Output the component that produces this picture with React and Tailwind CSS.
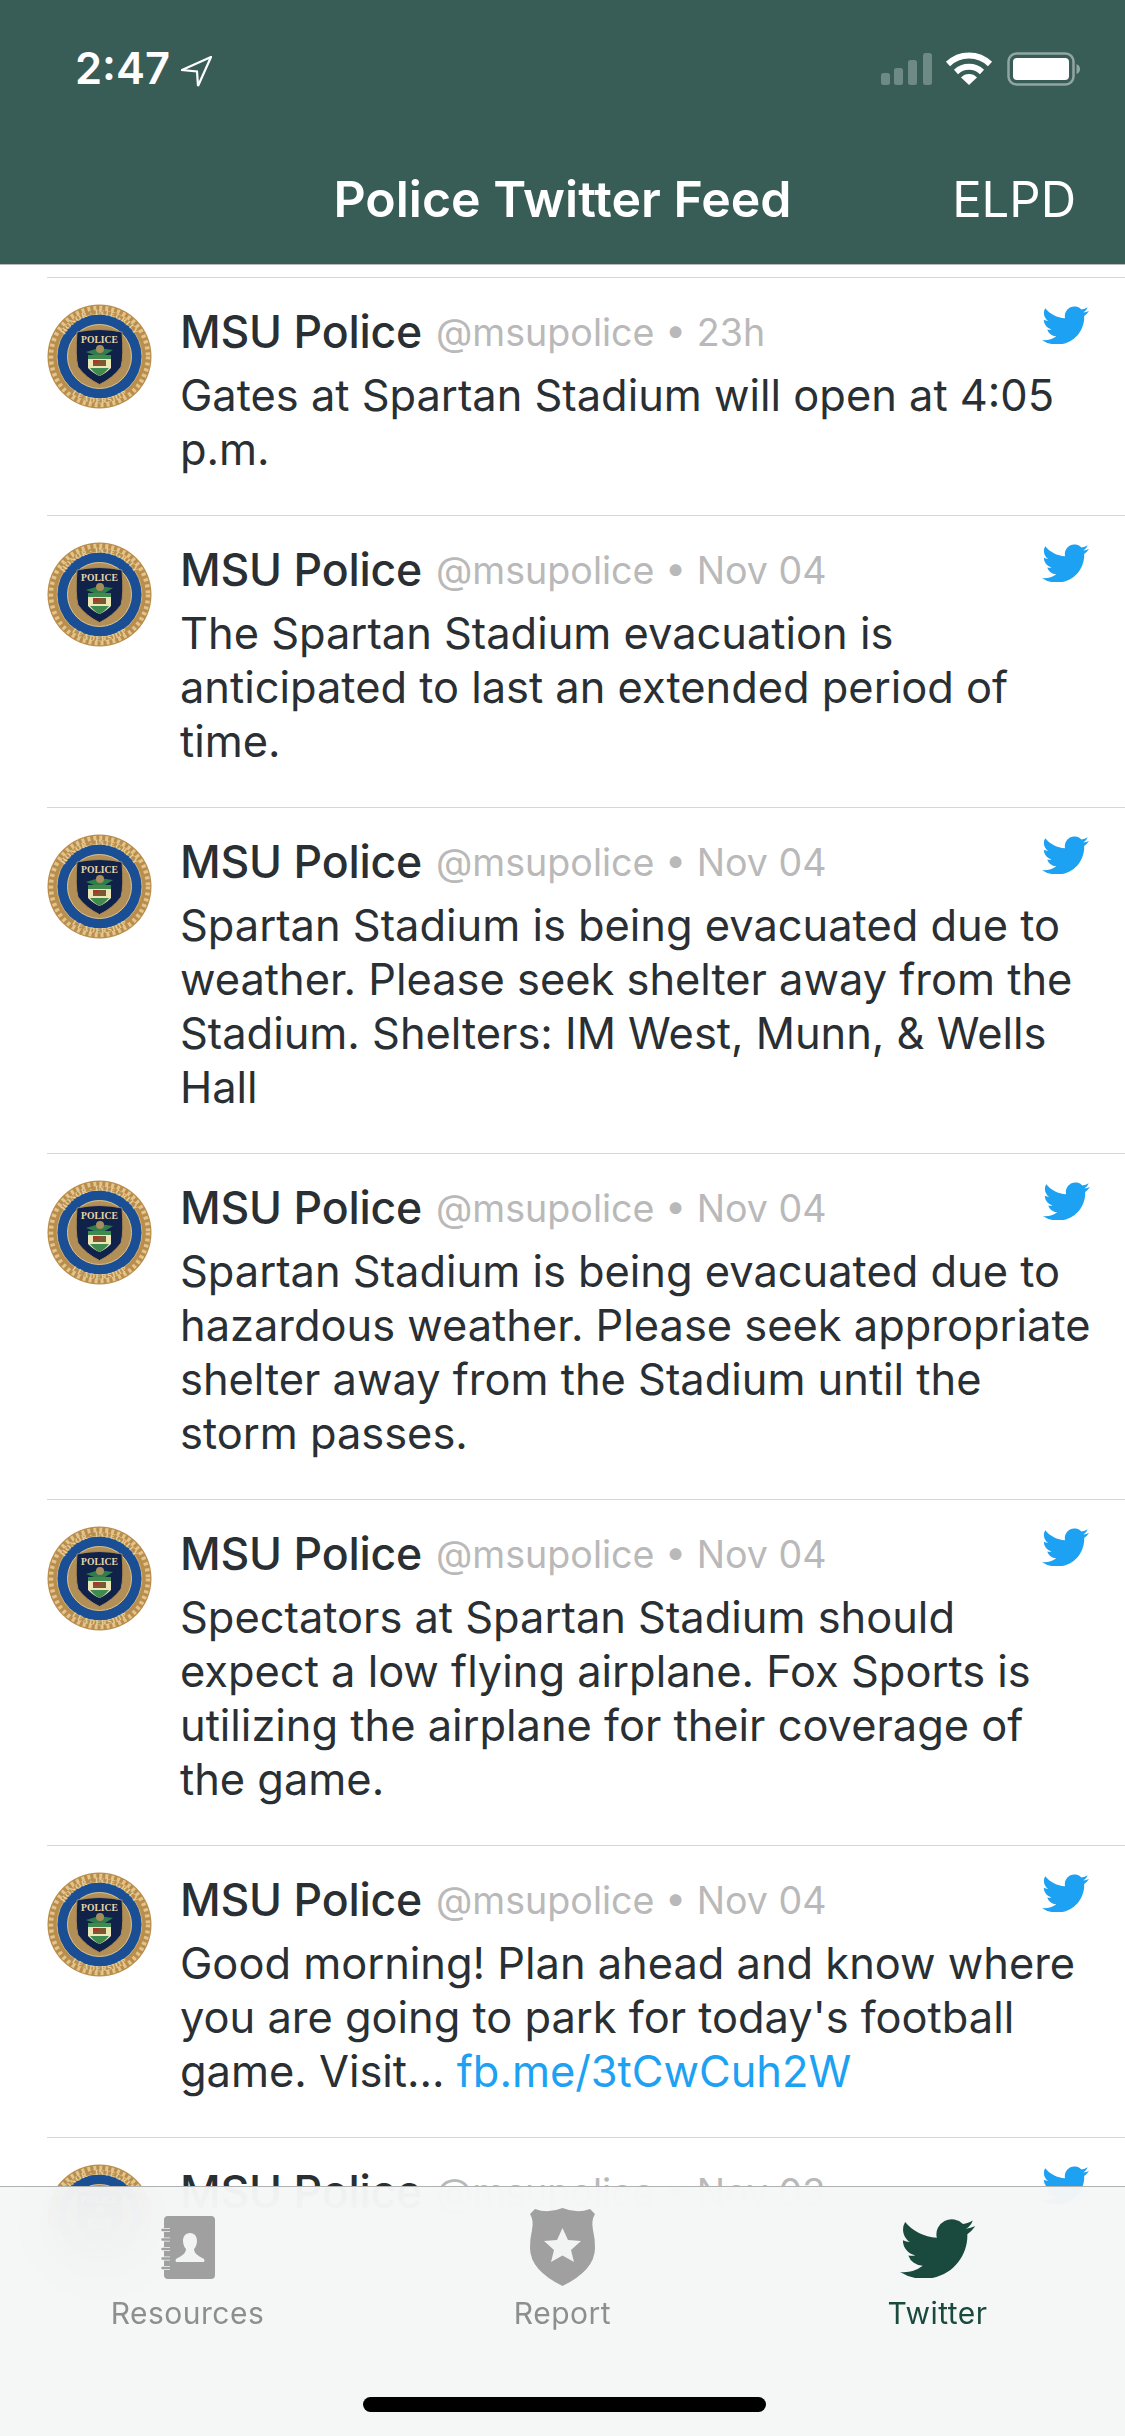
import React, { useId } from 'react';

const tweets = [
  { when: '23h', body: <>Gates at Spartan Stadium will open at 4:05<br />p.m.</> },
  { when: 'Nov 04', body: <>The Spartan Stadium evacuation is<br />anticipated to last an extended period of<br />time.</> },
  { when: 'Nov 04', body: <>Spartan Stadium is being evacuated due to<br />weather. Please seek shelter away from the<br />Stadium. Shelters: IM West, Munn, &amp; Wells<br />Hall</> },
  { when: 'Nov 04', body: <>Spartan Stadium is being evacuated due to<br />hazardous weather. Please seek appropriate<br />shelter away from the Stadium until the<br />storm passes.</> },
  { when: 'Nov 04', body: <>Spectators at Spartan Stadium should<br />expect a low flying airplane. Fox Sports is<br />utilizing the airplane for their coverage of<br />the game.</> },
  { when: 'Nov 04', body: <>Good morning! Plan ahead and know where<br />you are going to park for today's football<br />game. Visit... <span className="text-[#1da1f2]">fb.me/3tCwCuh2W</span></> },
  { when: 'Nov 03', body: null },
];

const BIRD = 'M23.953 4.57a10 10 0 01-2.825.775 4.958 4.958 0 002.163-2.723c-.951.555-2.005.959-3.127 1.184a4.92 4.92 0 00-8.384 4.482C7.69 8.095 4.067 6.13 1.64 3.162a4.822 4.822 0 00-.666 2.475c0 1.71.87 3.213 2.188 4.096a4.904 4.904 0 01-2.228-.616v.06a4.923 4.923 0 003.946 4.827 4.996 4.996 0 01-2.212.085 4.936 4.936 0 004.604 3.417 9.867 9.867 0 01-6.102 2.105c-.39 0-.779-.023-1.17-.067a13.995 13.995 0 007.557 2.209c9.053 0 13.998-7.496 13.998-13.985 0-.21 0-.42-.015-.63A9.935 9.935 0 0024 4.59z';

function Bird({ className }) {
  return (
    <svg viewBox="0 1.5 24 20" preserveAspectRatio="none" className={className}>
      <path d={BIRD} fill="currentColor" />
    </svg>
  );
}

function Seal() {
  const id = useId();
  return (
    <svg viewBox="0 0 105 105" className="w-[105px] h-[105px] shrink-0">
      <defs>
        <path id={id + 'top'} d="M 14 66 A 41 41 0 1 1 91 66" />
        <path id={id + 'bot'} d="M 17 72 A 40 40 0 0 0 88 72" />
      </defs>
      <circle cx="52.5" cy="52.5" r="52" fill="#b98d4c" />
      <circle cx="52.5" cy="52.5" r="48.5" fill="none" stroke="#e2c48c" strokeWidth="4.5" strokeDasharray="3 3" />
      <circle cx="52.5" cy="52.5" r="42.5" fill="#1a4f96" stroke="#d3b175" strokeWidth="1" />
      <circle cx="52.5" cy="52.5" r="32" fill="#b38f58" stroke="#ddc48f" strokeWidth="1" />
      <text fontFamily="'Liberation Serif', serif" fontWeight="700" fontSize="7.6" fill="#ecd49c" letterSpacing="0.35">
        <textPath href={'#' + id + 'top'} startOffset="50%" textAnchor="middle">HONOR · INTEGRITY</textPath>
      </text>
      <text fontFamily="'Liberation Serif', serif" fontWeight="700" fontSize="7.6" fill="#ecd49c" letterSpacing="0.3">
        <textPath href={'#' + id + 'bot'} startOffset="50%" textAnchor="middle" dominantBaseline="hanging">LEADERSHIP</textPath>
      </text>
      <path d="M30 28 Q52 23 75 28 Q77 52 74 63 Q66 74 52.5 80.5 Q39 74 31 63 Q28 52 30 28 Z" fill="#10224a" stroke="#a88a55" strokeWidth="1" />
      <text x="52.5" y="39" textAnchor="middle" fontFamily="'Liberation Serif', serif" fontWeight="700" fontSize="9.6" fill="#e8d7a8">POLICE</text>
      <path d="M39 48 L52 44 L66 46 L58 51 L47 51 Z" fill="#2f7d4a" />
      <circle cx="53" cy="45" r="4" fill="#a58e5c" />
      <path d="M41 51 H64 V64 Q58 70 52.5 72 Q47 70 41 64 Z" fill="#efe6b8" />
      <path d="M41 51 H64 V55 H41 Z" fill="#3f8a4f" />
      <rect x="46" y="56" width="13" height="6" fill="#7a5a30" />
      <rect x="46" y="56" width="6" height="3" fill="#a33a2c" />
      <path d="M43 64 H62 Q57 70 52.5 72 Q48 70 43 64 Z" fill="#3f8a4f" />
    </svg>
  );
}

function Tweet({ when, body }) {
  return (
    <div className="flex pl-[47px]">
      <div className="flex flex-1 border-t-[1.5px] border-[#d6d6d8] pt-[26px] pb-[39px] pr-[36px]">
        <Seal />
        <div className="flex-1 min-w-0 ml-[28px] -mt-[5px]">
          <div className="flex items-baseline h-[54px]">
            <span className="text-[44.6px] font-medium text-[#292f33] tracking-[-0.2px]">MSU Police</span>
            <span className="text-[37.6px] text-[#b9b9b9] ml-[14px] -translate-y-[2px]">@msupolice • {when}</span>
            <Bird className="w-[47px] h-[39px] ml-auto self-start mt-[6px] text-[#1da1f2]" />
          </div>
          {body && <p className="text-[43.4px] leading-[54px] whitespace-nowrap text-[#292f33] mt-[15px]">{body}</p>}
        </div>
      </div>
    </div>
  );
}

function StatusBar() {
  return (
    <div className="flex items-center justify-between h-[39px] pl-[75px] pr-[45px]">
      <div className="flex items-center text-white">
        <span className="text-[43.5px] font-semibold leading-none">2:47</span>
        <svg viewBox="0 0 31 32" className="w-[31px] h-[32px] ml-[11px] mt-[6px]">
          <path d="M30 1 L1 14 L16 15.5 L17 30 Z" fill="none" stroke="#fff" strokeWidth="2.2" strokeLinejoin="miter" />
        </svg>
      </div>
      <div className="flex items-center">
        <svg viewBox="0 0 51 32" className="w-[51px] h-[32px]">
          <g fill="#fff" fillOpacity="0.28">
            <rect x="0" y="20" width="9" height="12" rx="2.5" />
            <rect x="13" y="15" width="9" height="17" rx="2.5" />
            <rect x="27" y="7" width="9" height="25" rx="2.5" />
            <rect x="42" y="0" width="9" height="32" rx="2.5" />
          </g>
        </svg>
        <svg viewBox="0 0 48 33" className="w-[48px] h-[33px] ml-[13px]">
          <path d="M3 12 A30 30 0 0 1 45 12" fill="none" stroke="#fff" strokeWidth="6" />
          <path d="M11 20 A19 19 0 0 1 37 20" fill="none" stroke="#fff" strokeWidth="6" />
          <path d="M16 25.5 A11 11 0 0 1 32 25.5 L24 33 Z" fill="#fff" />
        </svg>
        <svg viewBox="0 0 73 34" className="w-[73px] h-[34px] ml-[14px]">
          <rect x="1.5" y="1.5" width="65" height="31" rx="8" fill="none" stroke="#fff" strokeOpacity="0.45" strokeWidth="2.5" />
          <rect x="6" y="6" width="56" height="22" rx="4" fill="#fff" />
          <path d="M69.5 12 Q73 13.5 73 17 Q73 20.5 69.5 22 Z" fill="#fff" fillOpacity="0.45" />
        </svg>
      </div>
    </div>
  );
}

function ContactsIcon() {
  return (
    <svg viewBox="0 0 54 63" className="w-[54px] h-[63px]">
      <rect x="3" y="0" width="51" height="63" rx="4" fill="#a0a0a0" />
      <path d="M1.5 14 H9 M1.5 23.5 H9 M1.5 33 H9 M1.5 42.5 H9 M1.5 52 H9" stroke="#f2f3f3" strokeWidth="4" />
      <path d="M1.5 14 H9 M1.5 23.5 H9 M1.5 33 H9 M1.5 42.5 H9 M1.5 52 H9" stroke="#a0a0a0" strokeWidth="2.5" strokeLinecap="round" />
      <path d="M29 17 C24 17 22 21 22 25 C22 29 24 32 25 33 C25 37 21 40 15 43 Q14 45 15 46 H43 Q44 45 43 43 C37 40 33 37 33 33 C34 32 36 29 36 25 C36 21 34 17 29 17 Z" fill="#f2f3f3" />
    </svg>
  );
}

function ShieldIcon() {
  return (
    <svg viewBox="0 0 65 78" className="w-[65px] h-[78px]">
      <path d="M5 1 Q18 6 32.5 0 Q47 6 60 1 L65 6 Q61 12 63 22 Q65 30 65 40 Q65 62 32.5 78 Q0 62 0 40 Q0 30 2 22 Q4 12 0 6 Z" fill="#a0a0a0" />
      <path d="M32.5 20 L38 32 L51 33 L41 42 L44 54 L32.5 47.5 L21 54 L24 42 L14 33 L27 32 Z" fill="#f2f3f3" />
    </svg>
  );
}

function TabItem({ label, active, children }) {
  return (
    <div className="flex-1 flex flex-col items-center">
      <div className="h-[90px] flex items-center justify-center">{children}</div>
      <span className={'text-[30px] leading-[36px] mt-[3px] tracking-[0.5px] ' + (active ? 'text-[#1a4a3e]' : 'text-[#8e8e8e]')}>{label}</span>
    </div>
  );
}

export default function App() {
  return (
    <div className="relative w-[1125px] h-[2436px] overflow-hidden bg-white font-['Inter',sans-serif]">
      <header className="h-[265px] pt-[49px] bg-[#375d56] border-b-[1.5px] border-[#b5b9b8]">
        <StatusBar />
        <div className="grid grid-cols-[1fr_auto_1fr] items-center mt-[74px] h-[60px] text-white text-[49px]">
          <span />
          <span className="font-semibold text-[50px]">Police Twitter Feed</span>
          <span className="justify-self-end pr-[49px]">ELPD</span>
        </div>
      </header>
      <div className="pt-[12px]">
        {tweets.map((t, i) => <Tweet key={i} when={t.when} body={t.body} />)}
      </div>
      <nav className="absolute bottom-0 left-0 right-0 h-[250px] bg-[#f4f5f5]/95 backdrop-blur-2xl border-t-[1.5px] border-[#b0b2b2]">
        <div className="flex pt-[15px]">
          <TabItem label="Resources"><ContactsIcon /></TabItem>
          <TabItem label="Report"><ShieldIcon /></TabItem>
          <TabItem label="Twitter" active><Bird className="w-[75px] h-[61px] text-[#1a4a3e]" /></TabItem>
        </div>
        <div className="absolute bottom-[24px] left-[363px] w-[403px] h-[15px] rounded-full bg-black" />
      </nav>
    </div>
  );
}
